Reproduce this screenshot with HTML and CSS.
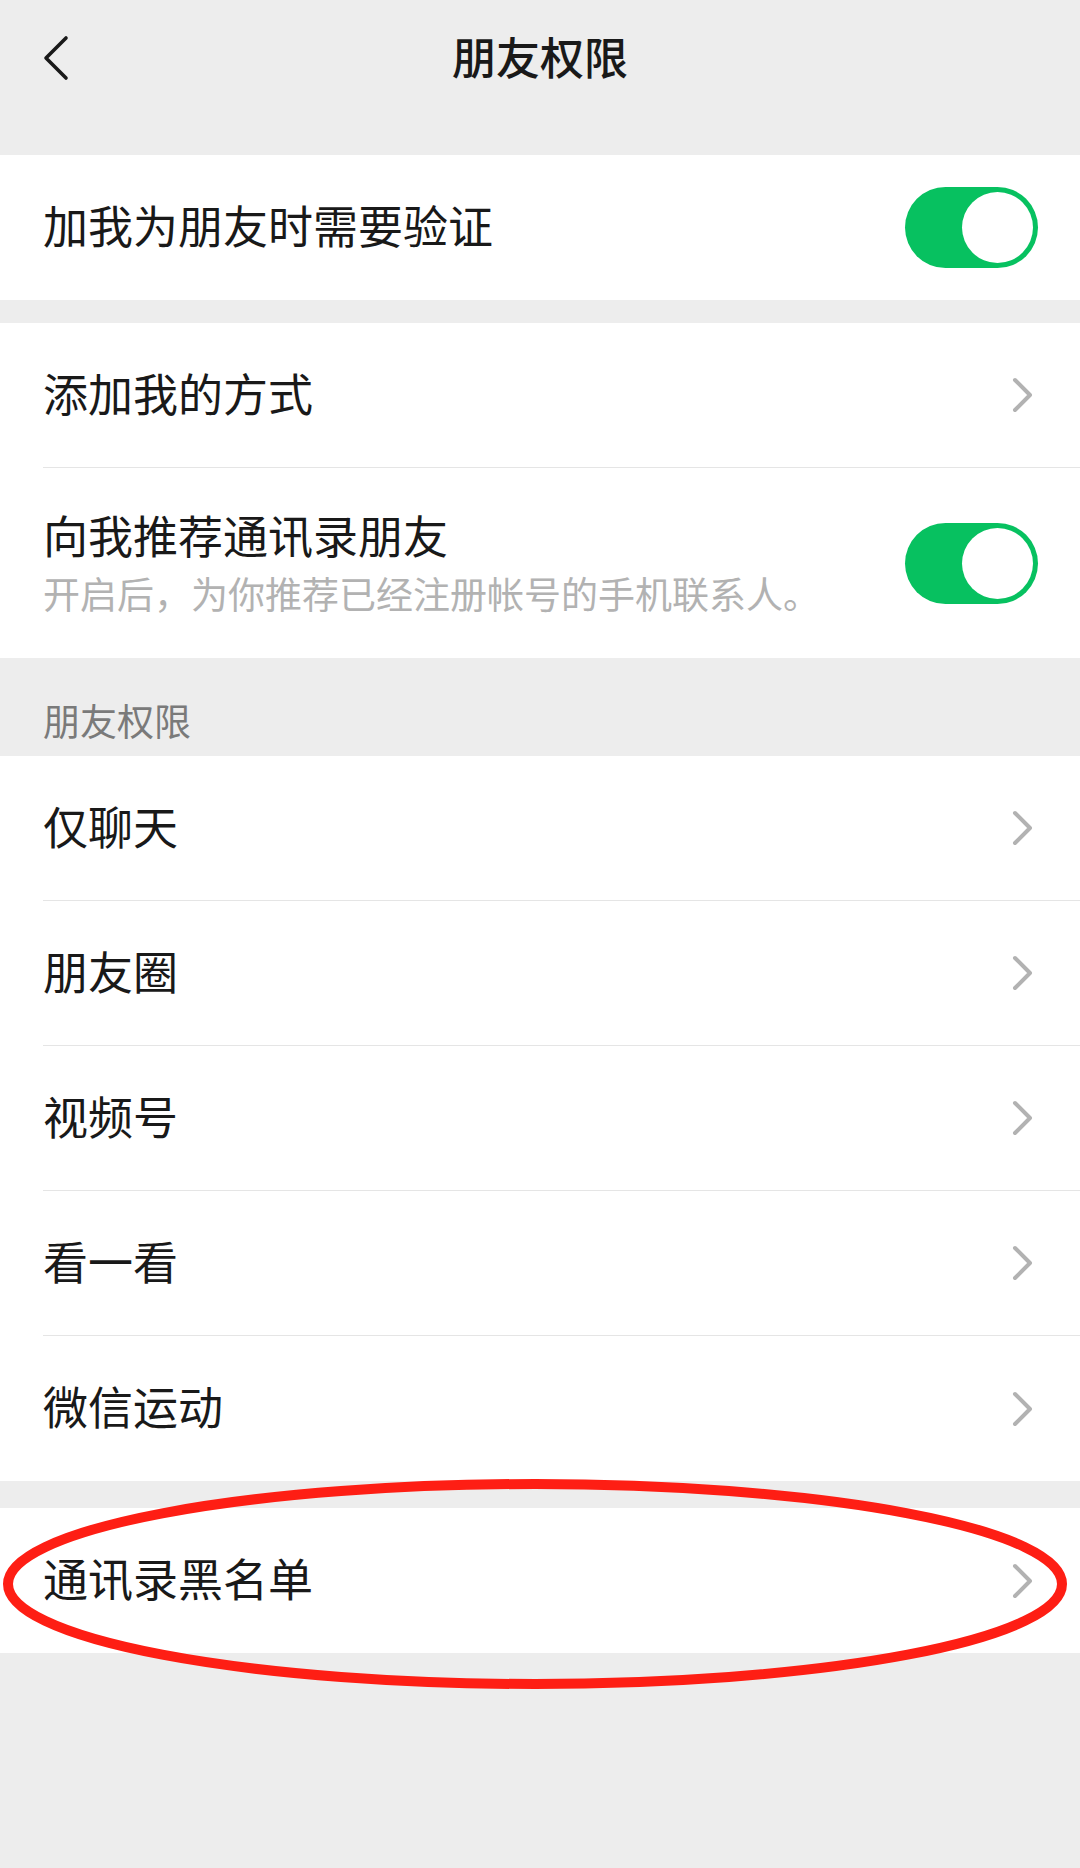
FILE: index.html
```html
<!DOCTYPE html>
<html lang="zh-CN">
<head>
    <meta charset="UTF-8">
    <meta name="viewport" content="width=device-width, initial-scale=1.0">
    <title>朋友权限</title>
    <link rel="stylesheet" href="styles.css">
</head>
<body>
    <div class="navbar">
        <div class="nav-back">
            <svg width="30" height="50" viewBox="0 0 30 50">
                <polyline points="26,5 6,25 26,45" fill="none" stroke="#191919" stroke-width="3.6" stroke-linecap="round" stroke-linejoin="round"/>
            </svg>
        </div>
        <h1 class="nav-title">朋友权限</h1>
        <div></div>
    </div>

    <div class="group group-first">
        <div class="cell">
            <div class="cell-body">
                <div class="cell-title">加我为朋友时需要验证</div>
                <div class="switch"><span class="knob"></span></div>
            </div>
        </div>
    </div>

    <div class="group">
        <div class="cell">
            <div class="cell-body">
                <div class="cell-title">添加我的方式</div>
                <svg class="arrow" width="24" height="40" viewBox="0 0 24 40"><polyline points="4,5 19,20 4,35" fill="none" stroke="#b2b2b2" stroke-width="4" stroke-linecap="round" stroke-linejoin="round"/></svg>
            </div>
        </div>
        <div class="cell">
            <div class="cell-body cell-tall">
                <div class="cell-text">
                    <div class="cell-title line-title">向我推荐通讯录朋友</div>
                    <div class="cell-desc">开启后，为你推荐已经注册帐号的手机联系人。</div>
                </div>
                <div class="switch"><span class="knob"></span></div>
            </div>
        </div>
    </div>

    <div class="group-label">朋友权限</div>
    <div class="group">
        <div class="cell">
            <div class="cell-body">
                <div class="cell-title">仅聊天</div>
                <svg class="arrow" width="24" height="40" viewBox="0 0 24 40"><polyline points="4,5 19,20 4,35" fill="none" stroke="#b2b2b2" stroke-width="4" stroke-linecap="round" stroke-linejoin="round"/></svg>
            </div>
        </div>
        <div class="cell">
            <div class="cell-body">
                <div class="cell-title">朋友圈</div>
                <svg class="arrow" width="24" height="40" viewBox="0 0 24 40"><polyline points="4,5 19,20 4,35" fill="none" stroke="#b2b2b2" stroke-width="4" stroke-linecap="round" stroke-linejoin="round"/></svg>
            </div>
        </div>
        <div class="cell">
            <div class="cell-body">
                <div class="cell-title">视频号</div>
                <svg class="arrow" width="24" height="40" viewBox="0 0 24 40"><polyline points="4,5 19,20 4,35" fill="none" stroke="#b2b2b2" stroke-width="4" stroke-linecap="round" stroke-linejoin="round"/></svg>
            </div>
        </div>
        <div class="cell">
            <div class="cell-body">
                <div class="cell-title">看一看</div>
                <svg class="arrow" width="24" height="40" viewBox="0 0 24 40"><polyline points="4,5 19,20 4,35" fill="none" stroke="#b2b2b2" stroke-width="4" stroke-linecap="round" stroke-linejoin="round"/></svg>
            </div>
        </div>
        <div class="cell">
            <div class="cell-body">
                <div class="cell-title">微信运动</div>
                <svg class="arrow" width="24" height="40" viewBox="0 0 24 40"><polyline points="4,5 19,20 4,35" fill="none" stroke="#b2b2b2" stroke-width="4" stroke-linecap="round" stroke-linejoin="round"/></svg>
            </div>
        </div>
    </div>

    <div class="group group-blacklist">
        <div class="cell">
            <div class="cell-body">
                <div class="cell-title">通讯录黑名单</div>
                <svg class="arrow" width="24" height="40" viewBox="0 0 24 40"><polyline points="4,5 19,20 4,35" fill="none" stroke="#b2b2b2" stroke-width="4" stroke-linecap="round" stroke-linejoin="round"/></svg>
            </div>
        </div>
        <!-- hand-drawn highlight -->
        <svg class="circle-mark" width="1080" height="230" viewBox="0 0 1080 230">
            <ellipse cx="535" cy="109" rx="527" ry="100" fill="none" stroke="#fe1e14" stroke-width="10"/>
        </svg>
    </div>
</body>
</html>
```

FILE: styles.css
```css
body {
    margin: 0;
    background: #ededed;
    font-family: "Noto Sans CJK SC", "Noto Sans", sans-serif;
    color: #191919;
    width: 1080px;
    min-height: 1868px;
}
.navbar {
    height: 116px;
    display: grid;
    grid-template-columns: 1fr auto 1fr;
    align-items: center;
}
.nav-back {
    padding-left: 40px;
    display: flex;
    align-items: center;
}
.nav-title {
    margin: 0;
    font-size: 44px;
    font-weight: 500;
    line-height: 60px;
    padding-bottom: 4px;
}
.group {
    background: #fff;
    margin-top: 23px;
}
.group-first {
    margin-top: 39px;
}
.cell {
    padding-left: 43px;
}
.cell-body {
    height: 145px;
    box-sizing: border-box;
    display: flex;
    align-items: center;
    justify-content: space-between;
    padding-right: 42px;
    border-bottom: 1px solid #e5e5e5;
}
.cell:last-child .cell-body,
.cell:nth-last-child(2):has(+ .circle-mark) .cell-body {
    border-bottom: none;
}
.cell-title {
    font-size: 45px;
    line-height: 60px;
    padding-bottom: 5px;
}
.cell-tall {
    height: 190px;
    padding-top: 37px;
    padding-bottom: 35px;
    align-items: flex-start;
}
.cell-tall .cell-title {
    padding-bottom: 0;
}
.cell-tall .switch {
    margin-top: 18px;
}
.cell-desc {
    font-size: 37px;
    line-height: 56px;
    color: #b2b2b2;
}
.arrow {
    margin-right: 3px;
}
.switch {
    width: 133px;
    height: 81px;
    border-radius: 41px;
    background: #07c160;
    display: flex;
    justify-content: flex-end;
    align-items: center;
    padding-right: 5px;
    box-sizing: border-box;
}
.knob {
    width: 71px;
    height: 71px;
    border-radius: 50%;
    background: #fff;
}
.group-label {
    font-size: 37px;
    line-height: 50px;
    color: #7a7a7a;
    padding: 37px 43px 11px;
}
.group-label + .group {
    margin-top: 0;
}
.group-blacklist {
    position: relative;
    margin-top: 27px;
}
.circle-mark {
    position: absolute;
    left: 0;
    top: -33px;
    overflow: visible;
    pointer-events: none;
}
```
